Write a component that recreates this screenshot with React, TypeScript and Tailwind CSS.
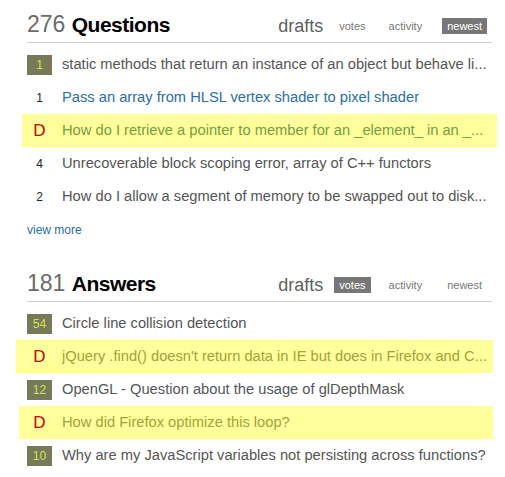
import React from "react";

type Row = { votes: string; kind: "badge" | "plain" | "draft"; title: string; link?: boolean; pull?: string };

const QUESTIONS: Row[] = [
  { votes: "1", kind: "badge", title: "static methods that return an instance of an object but behave li..." },
  { votes: "1", kind: "plain", title: "Pass an array from HLSL vertex shader to pixel shader", link: true },
  { votes: "D", kind: "draft", title: "How do I retrieve a pointer to member for an _element_ in an _...", pull: "-ml-[5px] -mr-[5px] pl-[5px] pr-[5px]" },
  { votes: "4", kind: "plain", title: "Unrecoverable block scoping error, array of C++ functors" },
  { votes: "2", kind: "plain", title: "How do I allow a segment of memory to be swapped out to disk..." },
];

const ANSWERS: Row[] = [
  { votes: "54", kind: "badge", title: "Circle line collision detection" },
  { votes: "D", kind: "draft", title: "jQuery .find() doesn't return data in IE but does in Firefox and C...", pull: "-ml-[11px] -mr-[1px] pl-[11px] pr-[1px]" },
  { votes: "12", kind: "badge", title: "OpenGL - Question about the usage of glDepthMask" },
  { votes: "D", kind: "draft", title: "How did Firefox optimize this loop?", pull: "-ml-[8px] -mr-[1px] pl-[8px] pr-[1px]" },
  { votes: "10", kind: "badge", title: "Why are my JavaScript variables not persisting across functions?" },
];

const TABS = ["votes", "activity", "newest"];

function Header({ count, label, active }: { count: string; label: string; active: string }) {
  return (
    <div className="flex h-[43px] items-end justify-between border-b border-[#cfcfcf]">
      <h2 className="mb-[6px] text-[23px] leading-none">
        <span className="text-[#6b6b6b]">{count}</span>{" "}
        <span className="text-[21px] font-bold tracking-[-0.5px] text-black">{label}</span>
      </h2>
      <div className="mb-[7px] mr-[5px] flex items-center">
        <span className="mr-[11px] text-[18px] leading-none text-[#606060]">drafts</span>
        {TABS.map((t, i) => (
          <span
            key={t}
            className={
              (t === active ? "bg-[#777777] text-white " : "text-[#777777] ") +
              (i === 0 ? "" : i === 1 ? "ml-[13px] " : "ml-[15px] ") +
              "px-[5px] text-[11px] leading-[16px]"
            }
          >
            {t}
          </span>
        ))}
      </div>
    </div>
  );
}

function Item({ row, draftColor }: { row: Row; draftColor: string }) {
  const draft = row.kind === "draft";
  return (
    <div className={"flex h-[33px] items-center " + (draft ? "bg-[#ffff9c] " + row.pull : "")}>
      <div className="flex w-[25px] shrink-0 justify-center">
        {row.kind === "badge" && (
          <span className="flex h-[20px] w-[25px] items-center justify-center bg-[#767a58] text-[12px] text-[#d6e050]">
            {row.votes}
          </span>
        )}
        {row.kind === "plain" && <span className="text-[12px] text-[#222]">{row.votes}</span>}
        {draft && <span className="text-[17px] leading-none text-[#cc0000]">D</span>}
      </div>
      <span
        className={
          "ml-[10px] overflow-hidden whitespace-nowrap text-[14.7px] " +
          (draft ? draftColor : row.link ? "text-[#2a6ea6]" : "text-[#555555]")
        }
      >
        {row.title}
      </span>
    </div>
  );
}

export default function App() {
  return (
    <div className="min-h-screen bg-white pl-[27px] pr-[13px]" style={{ fontFamily: '"Liberation Sans", Arial, sans-serif' }}>
      <section>
        <Header count="276" label="Questions" active="newest" />
        <div className="mt-[5px]">
          {QUESTIONS.map((r, i) => (
            <Item key={i} row={r} draftColor="text-[#74a040]" />
          ))}
        </div>
        <a className="mt-[10px] block text-[12px] leading-[14px] text-[#2a6ea6]">view more</a>
      </section>

      <section className="mt-[22px]">
        <Header count="181" label="Answers" active="votes" />
        <div className="mt-[5px]">
          {ANSWERS.map((r, i) => (
            <Item key={i} row={r} draftColor="text-[#a3a33a]" />
          ))}
        </div>
      </section>
    </div>
  );
}
